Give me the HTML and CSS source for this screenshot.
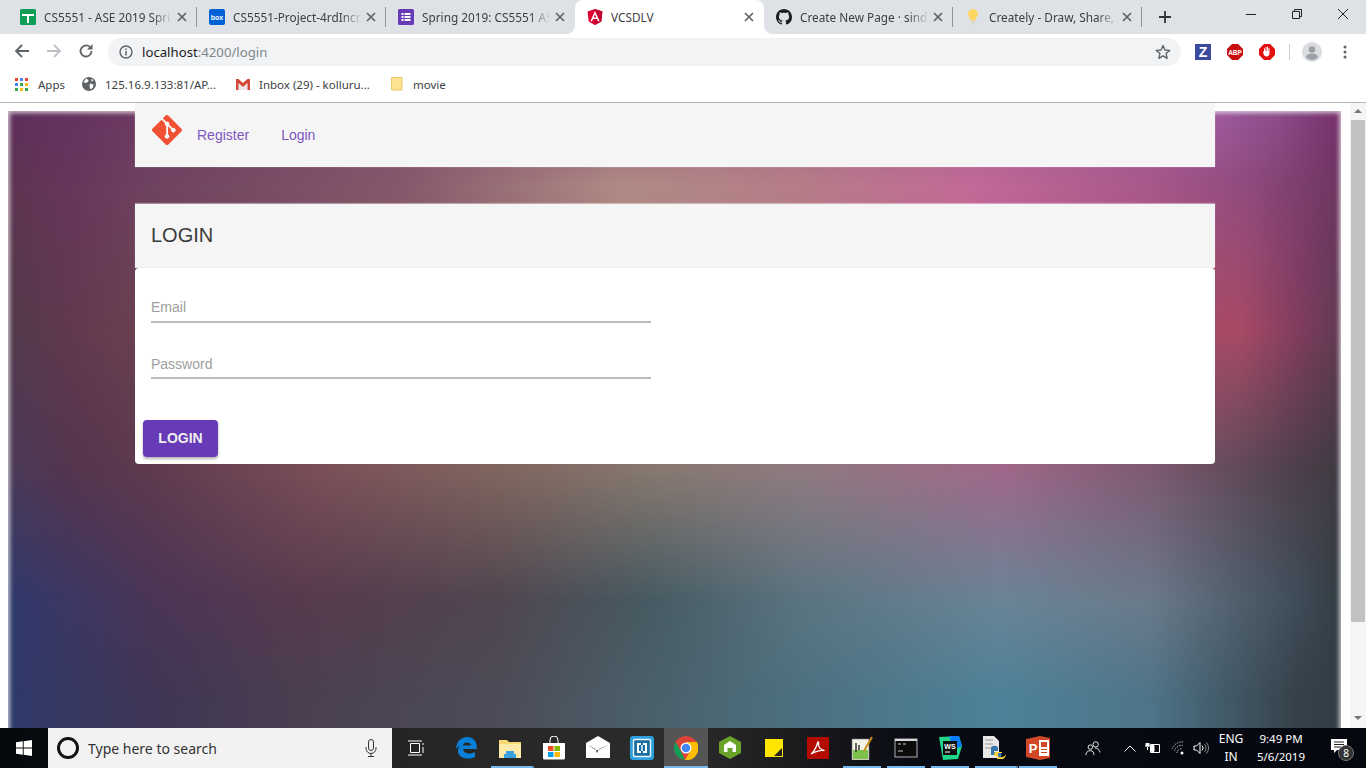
FILE: index.html
```html
<!DOCTYPE html>
<html lang="en">
<head>
<meta charset="utf-8">
<title>VCSDLV</title>
<link rel="stylesheet" href="styles.css">
</head>
<body>
<header class="chrome">
  <div class="tabstrip">
    <div class="tab">
      <svg class="fav" viewBox="0 0 16 16"><rect width="16" height="16" rx="1.5" fill="#0f9d58"/><path d="M2 5h12v2H9v7H7V7H2z" fill="#fff"/></svg>
      <span class="tab-title">CS5551 - ASE 2019 Spri</span><svg class="tab-x" viewBox="0 0 10 10"><path d="M1 1l8 8M9 1 1 9"/></svg>
    </div>
    <div class="tab">
      <svg class="fav" viewBox="0 0 16 16"><rect width="16" height="16" rx="2" fill="#0061d5"/><text x="8" y="11" class="fav-box">box</text></svg>
      <span class="tab-title">CS5551-Project-4rdIncr</span><svg class="tab-x" viewBox="0 0 10 10"><path d="M1 1l8 8M9 1 1 9"/></svg>
    </div>
    <div class="tab tab-before-active">
      <svg class="fav" viewBox="0 0 16 16"><rect width="16" height="16" rx="1.5" fill="#673ab7"/><path d="M3.500 4h2v2h-2zM6.500 4h6v2h-6zM3.500 7h2v2h-2zM6.500 7h6v2h-6zM3.500 10h2v2h-2zM6.500 10h6v2h-6z" fill="#fff"/></svg>
      <span class="tab-title">Spring 2019: CS5551 AS</span><svg class="tab-x" viewBox="0 0 10 10"><path d="M1 1l8 8M9 1 1 9"/></svg>
    </div>
    <div class="tab tab-active">
      <svg class="fav" viewBox="0 0 16 16"><path d="M8 0 .6 2.600l1.100 9.800L8 16l6.300-3.600 1.100-9.800z" fill="#dd0031"/><path d="M8 0v16l6.300-3.600 1.100-9.800z" fill="#c3002f"/><path d="M8 1.900 3.400 12.200h1.700l.9-2.300h4l.9 2.300h1.700zm1.300 6.600H6.700L8 5.300z" fill="#fff"/></svg>
      <span class="tab-title tab-title-plain">VCSDLV</span><svg class="tab-x" viewBox="0 0 10 10"><path d="M1 1l8 8M9 1 1 9"/></svg>
    </div>
    <div class="tab">
      <svg class="fav" viewBox="0 0 16 16"><path d="M8 0C3.580 0 0 3.580 0 8c0 3.540 2.290 6.530 5.470 7.590.4.070.55-.17.55-.38 0-.19-.01-.82-.01-1.490-2.010.37-2.530-.49-2.690-.94-.09-.23-.48-.94-.82-1.130-.28-.15-.68-.52-.01-.53.63-.01 1.080.58 1.230.82.72 1.210 1.870.87 2.330.66.07-.52.28-.87.51-1.070-1.780-.2-3.640-.89-3.640-3.950 0-.87.31-1.590.82-2.150-.08-.2-.36-1.020.08-2.120 0 0 .67-.21 2.200.82.64-.18 1.320-.27 2-.27.68 0 1.360.09 2 .27 1.530-1.040 2.200-.82 2.200-.82.44 1.100.16 1.920.08 2.120.51.56.82 1.270.82 2.150 0 3.070-1.870 3.750-3.650 3.950.29.25.54.73.54 1.480 0 1.070-.01 1.930-.01 2.200 0 .21.15.46.55.38A8.013 8.013 0 0016 8c0-4.420-3.580-8-8-8z" fill="#1b1f23"/></svg>
      <span class="tab-title">Create New Page · sind</span><svg class="tab-x" viewBox="0 0 10 10"><path d="M1 1l8 8M9 1 1 9"/></svg>
    </div>
    <div class="tab">
      <svg class="fav" viewBox="0 0 16 16"><path d="M8 0a5 5 0 0 0-5 5c0 2 1.200 3 2 4.300.5.800.6 1.700.6 2.200h4.800c0-.5.100-1.400.6-2.200C11.800 8 13 7 13 5a5 5 0 0 0-5-5z" fill="#fdd663"/><path d="M6 12.500h4V14.500l-1 1H7l-1-1z" fill="#d9d9d0"/></svg>
      <span class="tab-title">Creately - Draw, Share, </span><svg class="tab-x" viewBox="0 0 10 10"><path d="M1 1l8 8M9 1 1 9"/></svg>
    </div>
    <svg class="newtab" viewBox="0 0 12 12"><path d="M6 0v12M0 6h12" stroke="#2f3237" stroke-width="1.800" fill="none"/></svg>
    <div class="winctl">
      <svg class="win-icon" viewBox="0 0 12 12"><path d="M1 6.500h10" stroke="#222" fill="none"/></svg>
      <svg class="win-icon" viewBox="0 0 12 12"><path d="M1.500 3.500h7v7h-7zM3.500 3.500v-2h7v7h-2" stroke="#222" fill="none"/></svg>
      <svg class="win-icon" viewBox="0 0 12 12"><path d="M1 1l10 10M11 1 1 11" stroke="#222" fill="none"/></svg>
    </div>
  </div>
  <div class="toolbar">
    <svg class="nav-btn" viewBox="0 0 16 16"><path d="M15 8H2M8 2 2 8l6 6" stroke="#5f6368" stroke-width="1.800" fill="none"/></svg>
    <svg class="nav-btn nav-gap" viewBox="0 0 16 16"><path d="M1 8h13M8 2l6 6-6 6" stroke="#bdc1c6" stroke-width="1.800" fill="none"/></svg>
    <svg class="nav-btn nav-gap" viewBox="0 0 16 16"><path d="M13.500 8a5.500 5.500 0 1 1-1.600-3.900" stroke="#5f6368" stroke-width="1.800" fill="none"/><path d="M14.500 1v5.500H9z" fill="#5f6368"/></svg>
    <div class="omnibox">
      <svg class="info" viewBox="0 0 14 14"><circle cx="7" cy="7" r="6" stroke="#5f6368" stroke-width="1.400" fill="none"/><path d="M7 6v4.500M7 3.500v1.500" stroke="#5f6368" stroke-width="1.500"/></svg>
      <span class="url"><span class="url-host">localhost</span>:4200/login</span>
      <svg class="star" viewBox="0 0 16 16"><path d="M8 1.500 9.900 6l4.800.4-3.600 3.200 1 4.700L8 11.800l-4.100 2.500 1-4.700L1.300 6.400 6.100 6z" stroke="#5f6368" stroke-width="1.400" stroke-linejoin="round" fill="none"/></svg>
    </div>
    <div class="exts">
      <svg class="ext" viewBox="0 0 16 16"><rect width="16" height="16" fill="#3b4a9e"/><text x="8" y="13" class="ext-z">Z</text></svg>
      <svg class="ext" viewBox="0 0 16 16"><path d="M5 0h6l5 5v6l-5 5H5l-5-5V5z" fill="#c70d0d"/><text x="8" y="10.500" class="ext-abp">ABP</text></svg>
      <svg class="ext" viewBox="0 0 16 16"><path d="M5 0h6l5 5v6l-5 5H5l-5-5V5z" fill="#e60f0f"/><path d="M5 7V4.500h1V7h.5V3h1v4H8V2.800h1V7h.5V4h1v5.500c0 1.500-1 3-3 3-1.500 0-2.200-.8-2.700-2L3.800 8l.8-.4z" fill="#fff"/></svg>
      <span class="ext-sep"></span>
      <svg class="avatar" viewBox="0 0 20 20"><circle cx="10" cy="10" r="10" fill="#dadce0"/><circle cx="10" cy="7.500" r="3.300" fill="#9aa0a6"/><path d="M3.800 15c1-2.500 3.500-3.500 6.200-3.500s5.200 1 6.200 3.500c-1.500 2-3.800 3-6.200 3s-4.700-1-6.200-3z" fill="#9aa0a6"/></svg>
      <svg class="dots" viewBox="0 0 4 14"><circle cx="2" cy="2" r="1.500" fill="#5f6368"/><circle cx="2" cy="7" r="1.500" fill="#5f6368"/><circle cx="2" cy="12" r="1.500" fill="#5f6368"/></svg>
    </div>
  </div>
  <div class="bookmarks">
    <svg class="bm-apps" viewBox="0 0 13 13"><path d="M0 0h3v3H0z" fill="#ea4335"/><path d="M5 0h3v3H5z" fill="#4285f4"/><path d="M10 0h3v3h-3z" fill="#ea4335"/><path d="M0 5h3v3H0z" fill="#4285f4"/><path d="M5 5h3v3H5z" fill="#34a853"/><path d="M10 5h3v3h-3z" fill="#fbbc05"/><path d="M0 10h3v3H0z" fill="#34a853"/><path d="M5 10h3v3H5z" fill="#fbbc05"/><path d="M10 10h3v3h-3z" fill="#34a853"/></svg>
    <span class="bm-text bm-apps-text">Apps</span>
    <svg class="bm-globe" viewBox="0 0 14 14"><circle cx="7" cy="7" r="7" fill="#5f6368"/><path d="M4 1.500 6.500 3 6 5 3.500 6 1.500 5zM8 6.500l3.500 1-.5 3-2.500 2-1-3.500zM9.500 1.500l2 2-2 1z" fill="#fff"/></svg>
    <span class="bm-text bm-globe-text">125.16.9.133:81/AP...</span>
    <svg class="bm-gmail" viewBox="0 0 14 11"><path d="M2.500 4v7h9V4L7 8z" fill="#e8e8e8"/><path d="M0 0h2.500L7 4l4.500-4H14v11h-2.500V4L7 8 2.500 4v7H0z" fill="#d44638"/></svg>
    <span class="bm-text bm-gmail-text">Inbox (29) - kolluru...</span>
    <svg class="bm-folder" viewBox="0 0 12 14"><path d="M.5.500h10.500v12.500h-9.500a1 1 0 0 1-1-1z" fill="#fde293" stroke="#e8c868"/></svg>
    <span class="bm-text bm-folder-text">movie</span>
  </div>
</header>

<div class="viewport">
  <main class="page">
    <div class="backdrop">
      <div class="band band-600"></div>
      <div class="band band-470"></div>
      <div class="band band-330"></div>
      <div class="band band-185"></div>
      <div class="band band-120"></div>
      <div class="band band-edge"></div>
    </div>
    <div class="content">
      <nav class="navcard">
        <svg class="gitlogo" viewBox="0 0 92 92"><path fill="#f05133" d="M90.156 41.965 50.036 1.848a5.918 5.918 0 0 0-8.372 0l-8.328 8.332 10.566 10.566a7.030 7.030 0 0 1 7.230 1.684 7.034 7.034 0 0 1 1.669 7.277l10.187 10.184a7.028 7.028 0 0 1 7.278 1.672 7.040 7.040 0 0 1 0 9.957 7.050 7.050 0 0 1-9.965 0 7.044 7.044 0 0 1-1.528-7.660l-9.500-9.497V59.360a7.040 7.040 0 0 1 1.860 11.290 7.040 7.040 0 0 1-9.957 0 7.040 7.040 0 0 1 0-9.958 7.060 7.060 0 0 1 2.304-1.539V33.926a7.049 7.049 0 0 1-3.820-9.234L29.242 14.272 1.730 41.777a5.925 5.925 0 0 0 0 8.371L41.852 90.270a5.925 5.925 0 0 0 8.370 0l39.934-39.934a5.925 5.925 0 0 0 0-8.371"/></svg>
        <a class="navlink" href="#">Register</a>
        <a class="navlink" href="#">Login</a>
      </nav>
      <section class="login">
        <h1 class="login-head">LOGIN</h1>
        <form class="login-form">
          <input class="field" type="text" placeholder="Email">
          <input class="field" type="password" placeholder="Password">
          <button class="submit" type="button">LOGIN</button>
        </form>
      </section>
    </div>
  </main>
  <div class="scrollbar">
    <span class="arrow-up"></span>
    <span class="thumb"></span>
    <span class="arrow-down"></span>
  </div>
</div>

<footer class="taskbar">
  <div class="start"><svg class="start-logo" viewBox="0 0 16 16"><path d="M0 2.300 6.800 1.300v6.300H0zM7.700 1.200 16 0v7.600H7.700zM0 8.400h6.800v6.300L0 13.700zM7.700 8.400H16V16l-8.300-1.200z" fill="#fff"/></svg></div>
  <div class="search">
    <span class="cortana"></span>
    <span class="search-text">Type here to search</span>
    <svg class="mic" viewBox="0 0 12 18"><rect x="3.500" y=".5" width="5" height="11" rx="2.500" stroke="#333" fill="none"/><path d="M1 8v1.500a5 5 0 0 0 10 0V8M6 14.500v3M3 17.500h6" stroke="#333" fill="none"/></svg>
  </div>
  <div class="taskview"><svg class="tv-icon" viewBox="0 0 16 16"><path d="M2.500 3.500h9v9h-9zM0 1h14M0 15h14M15 3v2M15 7v6" stroke="#fff" fill="none"/></svg></div>
  <div class="tb-items">
    <div class="tb-item"><svg class="tb-icon" viewBox="0 0 24 24"><path d="M2 14C2 6 7 1 13.500 1 19 1 23 5 23 13H9c.5 4.500 6 6 12 3v5c-8 3.500-17 1-17-6 0-3 1-6 4-8-2 1.500-4 3.500-6 6zM9 9.500h8c0-4-8-4-8 0z" fill="#0a7fd9"/></svg></div>
    <div class="tb-item tb-open tb-stack"><svg class="tb-icon" viewBox="0 0 24 24"><path d="M1 4h8l2 2h12v16H1z" fill="#f7d774"/><path d="M1 8h22v14H1z" fill="#fde9a8"/><path d="M8 15h8v3h2v4H6v-4h2z" fill="#3aa0e0"/></svg></div>
    <div class="tb-item"><svg class="tb-icon" viewBox="0 0 24 24"><path d="M1 7h22v15a1.500 1.500 0 0 1-1.500 1.500h-19A1.500 1.500 0 0 1 1 22z" fill="#fff"/><path d="M8 8V4a4 4 0 0 1 8 0v4" stroke="#fff" fill="none"/><path d="M6 10h5.500v5H6z" fill="#f25022"/><path d="M12.500 10H18v5h-5.500z" fill="#7fba00"/><path d="M6 16h5.500v5H6z" fill="#00a4ef"/><path d="M12.500 16H18v5h-5.500z" fill="#ffb900"/></svg></div>
    <div class="tb-item"><svg class="tb-icon" viewBox="0 0 24 24"><path d="M0 7 12 0l12 7v15H0z" fill="#fff"/><path d="M0 8l11 6.500L24 8 13 13l-2 4-1.500-4z" fill="#222"/></svg></div>
    <div class="tb-item"><svg class="tb-icon" viewBox="0 0 24 24"><rect width="24" height="24" rx="3" fill="#2c9fdd"/><rect x="3.500" y="3.500" width="17" height="17" rx="1" fill="#1b6d9e" stroke="#e8f4fb" stroke-width="1.400"/><path d="M7 7h4v2H9v6h2v2H7zM17 7h-4v2h2v6h-2v2h4z" fill="#fff"/><path d="M11 9h2v6h-2z" fill="#bcdcf0"/></svg></div>
    <div class="tb-item tb-active"><svg class="tb-icon" viewBox="0 0 24 24"><circle cx="12" cy="12" r="12" fill="#db4437"/><path d="M12 6h10.800A12 12 0 0 1 11 24l5.500-9.500z" fill="#fbbc05"/><path d="M1.600 6 7 15.500 11 24A12 12 0 0 1 1.600 6z" fill="#0f9d58"/><circle cx="12" cy="12" r="5.500" fill="#fff"/><circle cx="12" cy="12" r="4.300" fill="#4285f4"/></svg></div>
    <div class="tb-item"><svg class="tb-icon" viewBox="0 0 24 24"><path d="M12 0 23 6v11l-11 6L1 17V6z" fill="#6aa32a"/><path d="M12 5l6 4v7h-3.500v-4h-5v4H6V9z" fill="#fff"/></svg></div>
    <div class="tb-item"><svg class="tb-icon tb-sticky" viewBox="0 0 18 18"><path d="M0 0h18v18H0z" fill="#ffe600"/><path d="M17 9v8H9z" fill="#222"/></svg></div>
    <div class="tb-item"><svg class="tb-icon" viewBox="0 0 24 24"><rect x="1" y="1" width="22" height="22" fill="#b30b00"/><path d="M5 18c3-2 5-6 6.500-11 .5-2 1.500-1 1 1-.5 3 2 6 6 6.500-4-.5-9 1-13.500 3.500z" stroke="#fff" stroke-width="1.300" fill="none"/></svg></div>
    <div class="tb-item tb-open"><svg class="tb-icon" viewBox="0 0 24 24"><path d="M2 3h17v21H2z" fill="#f1f1e4" stroke="#777" stroke-width=".6"/><path d="M3 14h15v9H3z" fill="#7cc14a"/><path d="M6 7v9M9 9v5" stroke="#333" stroke-width="1.500"/><path d="M14 15 22 1" stroke="#c98a1b" stroke-width="2"/></svg></div>
    <div class="tb-item tb-open"><svg class="tb-icon" viewBox="0 0 24 24"><rect x="1" y="3" width="22" height="18" fill="#0c0c0c" stroke="#b0b0b0"/><path d="M1 3h22v2H1z" fill="#d8d8d8"/><path d="M4 8h3M9 8h3M4 15h5" stroke="#ccc"/></svg></div>
    <div class="tb-item tb-open"><svg class="tb-icon" viewBox="0 0 24 24"><path d="M1 1l20-1 3 10-4 13-15 1z" fill="#21d789"/><path d="M11 0h10l3 10-8 4z" fill="#087cfa"/><rect x="5" y="5" width="14" height="14" fill="#111"/><text x="12" y="13" class="tb-ws">WS</text><path d="M7 16h5" stroke="#fff"/></svg></div>
    <div class="tb-item tb-open tb-stack"><svg class="tb-icon" viewBox="0 0 24 24"><path d="M1 0h11l5 5v17H1z" fill="#e8e8e8"/><path d="M3 4h8M3 8h8M3 12h6" stroke="#999"/><path d="M9 12c0-3 7-3 7 0v3H12v1h6c2 0 2 6 0 6h-2v-3H9z" fill="#3776ab"/><path d="M24 17c0 5-8 5-8 3v-3h4v-1h-6c-2 0-2 3-2 4h3v3h5c2 0 4-2 4-6z" fill="#ffd43b"/></svg></div>
    <div class="tb-item tb-open"><svg class="tb-icon" viewBox="0 0 24 24"><path d="M14 0 24 2v20l-10 2L0 21V3z" fill="#d24726"/><path d="M13 4h10v16H13z" fill="#fff"/><path d="M15 6h6v5h-6zM15 13h6v1h-6zM15 16h6v1h-6z" fill="#d24726"/><text x="7" y="17" class="tb-p">P</text></svg></div>
  </div>
  <div class="tray">
    <svg class="tray-people" viewBox="0 0 18 18"><circle cx="12" cy="5" r="3" stroke="#fff" fill="none"/><circle cx="6" cy="8" r="2.500" stroke="#fff" fill="none"/><path d="M1 17c0-3 2-5 5-5s4 2 4 5M11 9c3 0 5 2 6 5" stroke="#fff" fill="none"/></svg>
    <svg class="tray-chev" viewBox="0 0 12 7"><path d="M.5 6.500 6 1l5.500 5.500" stroke="#fff" fill="none"/></svg>
    <svg class="tray-batt" viewBox="0 0 16 12"><path d="M5.500 2.500h9v8h-9z" stroke="#fff" fill="none"/><path d="M6.500 3.500H9v6H6.500zM1 1v3h3V1M0 4h5M2.500 5v3" stroke="#fff" fill="#fff"/></svg>
    <svg class="tray-wifi" viewBox="0 0 14 14"><path d="M1 8a11 11 0 0 1 12-7M3.500 10A7 7 0 0 1 12 4.500M6 12a4 4 0 0 1 5-4" stroke="#bbb" stroke-dasharray="1.500 1" fill="none"/><circle cx="11" cy="12" r="1.500" fill="#fff"/></svg>
    <svg class="tray-sound" viewBox="0 0 16 14"><path d="M1 5h2.500L7 1.500v11L3.500 9H1z" stroke="#fff" fill="none"/><path d="M9 4.500a3.500 3.500 0 0 1 0 5" stroke="#fff" fill="none"/><path d="M11.500 3a6 6 0 0 1 0 8M13.500 1.500a8.500 8.500 0 0 1 0 11" stroke="#888" fill="none"/></svg>
    <div class="tray-lang"><span>ENG</span><span>IN</span></div>
    <div class="tray-clock"><span>9:49 PM</span><span>5/6/2019</span></div>
    <div class="tray-notif">
      <svg class="notif-icon" viewBox="0 0 16 15"><path d="M0 0h16v11H6l-3 3v-3H0z" fill="#fff"/><path d="M3 3h10M3 5.500h10M3 8h7" stroke="#222"/></svg>
      <span class="notif-badge">8</span>
    </div>
  </div>
</footer>
</body>
</html>
```

FILE: styles.css
```css
* { box-sizing: border-box; }
html, body { height: 100%; margin: 0; }
body {
  display: flex;
  flex-direction: column;
  height: 768px;
  overflow: hidden;
  background: #fff;
  font-family: "Liberation Sans", Arial, sans-serif;
}

/* browser chrome */
.chrome { flex: none; height: 103px; border-bottom: 1px solid #b4b4b4; background: #fff; }
.tabstrip { display: flex; align-items: center; height: 34px; padding-left: 8px; background: #dee1e6; }
.tab {
  position: relative;
  display: flex;
  align-items: center;
  flex: none;
  width: 189px;
  height: 34px;
  padding: 0 10px 0 12px;
  font: 11.800px "Noto Sans", sans-serif;
  color: #3c4043;
}
.tab::after {
  content: "";
  position: absolute;
  right: 0;
  top: 7px;
  height: 20px;
  border-right: 1px solid #8f9297;
}
.tab-before-active::after { display: none; }
.tab-active { background: #fff; border-radius: 8px 8px 0 0; }
.tab-active::before, .tab-active::after {
  content: "";
  position: absolute;
  top: auto;
  bottom: 0;
  width: 8px;
  height: 8px;
  border: 0;
}
.tab-active::before { left: -8px; background: radial-gradient(circle at 0 0, transparent 7.500px, #fff 8px); }
.tab-active::after { right: -8px; background: radial-gradient(circle at 100% 0, transparent 7.500px, #fff 8px); }
.fav { flex: none; width: 16px; height: 16px; margin-right: 8px; }
.fav-box { font: bold 7px "Liberation Sans", sans-serif; fill: #fff; text-anchor: middle; }
.tab-title {
  flex: 1;
  min-width: 0;
  white-space: pre;
  overflow: hidden;
  -webkit-mask-image: linear-gradient(90deg, #000 84%, transparent 100%);
  mask-image: linear-gradient(90deg, #000 84%, transparent 100%);
}
.tab-title-plain { -webkit-mask-image: none; mask-image: none; }
.tab-x { flex: none; width: 10px; height: 10px; margin-left: 4px; stroke: #5f6368; stroke-width: 1.700; fill: none; }
.newtab { flex: none; width: 12px; height: 12px; margin-left: 17px; }
.winctl { display: flex; margin-left: auto; height: 34px; align-items: flex-start; }
.win-icon { width: 12px; height: 12px; margin: 8px 17px 0; }

.toolbar { display: flex; align-items: center; height: 34px; padding-left: 14px; }
.nav-btn { flex: none; width: 16px; height: 16px; }
.nav-gap { margin-left: 16px; }
.omnibox {
  display: flex;
  align-items: center;
  flex: none;
  width: 1073px;
  height: 28px;
  margin: 2px 0 0 14px;
  padding: 0 10px 0 11px;
  background: #f1f3f4;
  border-radius: 14px;
}
.info { flex: none; width: 14px; height: 14px; }
.url { margin-left: 9px; font: 13.200px "Noto Sans", sans-serif; color: #80868b; }
.url-host { color: #202124; }
.star { flex: none; width: 16px; height: 16px; margin-left: auto; }
.exts { display: flex; align-items: center; margin-top: 2px; }
.ext { flex: none; width: 16px; height: 16px; margin-left: 16px; }
.ext:first-child { margin-left: 14px; }
.ext-z { font: bold 14px "Liberation Sans", sans-serif; fill: #fff; text-anchor: middle; }
.ext-abp { font: bold 6.500px "Liberation Sans", sans-serif; fill: #fff; text-anchor: middle; }
.ext-sep { width: 1px; height: 16px; margin: 0 12px 0 14px; background: #d0d0d0; }
.avatar { flex: none; width: 20px; height: 20px; }
.dots { flex: none; width: 4px; height: 14px; margin-left: 21px; }

.bookmarks { display: flex; align-items: center; height: 32px; padding-left: 15px; }
.bm-text { font: 11.500px "Noto Sans", sans-serif; color: #3c4043; white-space: nowrap; }
.bm-apps { flex: none; width: 13px; height: 13px; }
.bm-apps-text { margin-left: 10px; width: 44px; }
.bm-globe { flex: none; width: 14px; height: 14px; }
.bm-globe-text { margin-left: 9px; width: 131px; }
.bm-gmail { flex: none; width: 14px; height: 11px; }
.bm-gmail-text { margin-left: 9px; width: 132px; }
.bm-folder { flex: none; width: 12px; height: 14px; }
.bm-folder-text { margin-left: 10px; }

/* page */
.viewport { flex: 1; display: flex; min-height: 0; }
.page { position: relative; flex: 1; min-width: 0; overflow: hidden; background: #fff; }

/* Blurred wallpaper: horizontal colour rows, each fading into the row below. */
.backdrop {
  position: absolute;
  left: 8px;
  top: 8px;
  right: 9px;
  bottom: -20px;
  background: linear-gradient(90deg, #2c3868 0, #323a68 22px, #3f3555 142px, #4a3f50 292px, #4c4c58 492px, #4a606a 642px, #4c7080 792px, #4c8299 992px, #4e7488 1142px, #354048 1292px, #333c44 100%);
}
.band { position: absolute; inset: 0; }
.band-600 {
  background: linear-gradient(90deg, #2d3a6c 0, #35386a 22px, #4a3556 142px, #573a4e 292px, #504650 492px, #465a62 642px, #5a7480 792px, #6a8496 992px, #6a7a8a 1142px, #3e4c58 1292px, #333c42 100%);
  -webkit-mask-image: linear-gradient(180deg, #000 489px, transparent 589px);
  mask-image: linear-gradient(180deg, #000 489px, transparent 589px);
}
.band-470 {
  background: linear-gradient(90deg, #4a3a58 0, #54354e 62px, #5e3a4f 142px, #7a4f58 312px, #80665f 492px, #86786f 642px, #8e7a80 792px, #a0688a 992px, #7d5a72 1142px, #4c3f4a 1292px, #3f3a42 100%);
  -webkit-mask-image: linear-gradient(180deg, #000 359px, transparent 489px);
  mask-image: linear-gradient(180deg, #000 359px, transparent 489px);
}
.band-330 {
  background: linear-gradient(90deg, #523a4c 0, #61394f 62px, #6a4050 127px, #8a5560 392px, #a07a7c 692px, #b05a80 992px, #a84a66 1207px, #a84a66 1232px, #803c5e 1292px, #603a52 100%);
  -webkit-mask-image: linear-gradient(180deg, #000 219px, transparent 359px);
  mask-image: linear-gradient(180deg, #000 219px, transparent 359px);
}
.band-185 {
  background: linear-gradient(90deg, #5e3450 0, #67365a 62px, #6f4260 142px, #85586b 392px, #b08b85 612px, #b67d88 792px, #c46a98 962px, #a8588a 1142px, #8e4a7c 1242px, #6d3560 100%);
  -webkit-mask-image: linear-gradient(180deg, #000 74px, transparent 219px);
  mask-image: linear-gradient(180deg, #000 74px, transparent 219px);
}
.band-120 {
  background: linear-gradient(90deg, #5e2f5a 0, #65325f 62px, #6e3a62 127px, #a06a80 692px, #9e5a9c 1207px, #8a4c88 1272px, #75306a 100%);
  -webkit-mask-image: linear-gradient(180deg, #000 9px, transparent 74px);
  mask-image: linear-gradient(180deg, #000 9px, transparent 74px);
}
.band-edge { box-shadow: inset 0 0 4px 2px rgba(255,255,255,.7); }

.content { position: relative; width: 1080px; margin: 0 auto; }
.navcard {
  display: flex;
  align-items: center;
  gap: 32px;
  height: 64px;
  padding: 0 0 0 17px;
  background: #f5f5f5;
  box-shadow: 0 0 1px rgba(255,255,255,.5);
}
.gitlogo { flex: none; width: 30px; height: 30px; margin: -11px -17px 0 0; }
.navlink { font-size: 14px; color: #7e57c2; text-decoration: none; }
.login { margin-top: 37px; }
.login-head {
  height: 64px;
  margin: 0;
  padding: 20px 16px 0;
  background: #f5f5f5;
  border-bottom: 1px solid #eee;
  box-shadow: 0 -1px 1px rgba(255,255,255,.4);
  font-size: 20px;
  line-height: 23px;
  font-weight: 400;
  color: #3a3a3a;
}
.login-form {
  display: flex;
  flex-direction: column;
  align-items: flex-start;
  height: 196px;
  padding: 19px 16px 0;
  background: #fff;
  border-radius: 4px;
}
.field {
  display: block;
  width: 500px;
  height: 36px;
  padding: 6px 0 0;
  border: 0;
  border-bottom: 2px solid #bdbdbd;
  outline: 0;
  font: 14px "Liberation Sans", sans-serif;
  background: transparent;
}
.field::placeholder { color: #9e9e9e; }
.field + .field { margin-top: 20px; padding-top: 8px; }
.submit {
  width: 75px;
  height: 37px;
  margin: 41px 0 0 -8px;
  padding: 0 0 2px;
  border: 0;
  border-radius: 4px;
  background: #673ab7;
  color: #eee;
  font: bold 14px "Liberation Sans", sans-serif;
  box-shadow: 0 2px 3px rgba(0,0,0,.3);
}
.scrollbar { flex: none; display: flex; flex-direction: column; align-items: center; width: 16px; padding-top: 6px; background: #f5f5f5; }
.arrow-up { width: 0; height: 0; border: 4px solid transparent; border-top: 0; border-bottom: 4px solid #777; }
.thumb { width: 14px; height: 502px; margin-top: 7px; background: #c1c1c1; }
.arrow-down { width: 0; height: 0; margin-top: 94px; border: 4px solid transparent; border-bottom: 0; border-top: 4px solid #777; }

/* taskbar */
.taskbar {
  flex: none;
  display: flex;
  align-items: stretch;
  height: 40px;
  background: linear-gradient(90deg, #04070c 0, #262626 31%, #2c2c2c 50%, #1f1f20 56%, #070a12 68%, #060810 100%);
  color: #fff;
}
.start { flex: none; display: flex; align-items: center; justify-content: center; width: 48px; }
.start-logo { width: 16px; height: 16px; }
.search { flex: none; display: flex; align-items: center; width: 344px; padding-left: 9px; background: #f2f2f2; }
.cortana { flex: none; width: 22px; height: 22px; border: 3px solid #111; border-radius: 50%; }
.search-text { margin-left: 9px; font: 14px "Noto Sans", sans-serif; color: #333; }
.mic { flex: none; width: 12px; height: 18px; margin-left: auto; margin-right: 15px; }
.taskview { flex: none; display: flex; align-items: center; justify-content: center; width: 52px; }
.tv-icon { width: 16px; height: 16px; margin-right: 4px; }
.tb-items { flex: none; display: flex; }
.tb-item { position: relative; flex: none; display: flex; align-items: center; justify-content: center; width: 44px; height: 40px; }
.tb-icon { width: 24px; height: 24px; }
.tb-sticky { width: 18px; height: 18px; }
.tb-open::after { content: ""; position: absolute; left: 3px; right: 3px; bottom: 0; height: 2px; background: #76b9ed; }
.tb-stack::after { right: 0; box-shadow: 2px 0 0 #5a8db5; }
.tb-active { background: #555; }
.tb-active::after { content: ""; position: absolute; left: 0; right: 0; bottom: 0; height: 2px; background: #76b9ed; }
.tb-ws { font: bold 7px "Liberation Sans", sans-serif; fill: #fff; text-anchor: middle; }
.tb-p { font: bold 13px "Liberation Sans", sans-serif; fill: #fff; text-anchor: middle; }
.tray { flex: 1; display: flex; align-items: center; font: 12px "Noto Sans", sans-serif; color: #fff; }
.tray-people { flex: none; width: 16px; height: 16px; margin-left: 25px; }
.tray-chev { flex: none; width: 12px; height: 7px; margin-left: 23px; }
.tray-batt { flex: none; width: 16px; height: 12px; margin-left: 9px; }
.tray-wifi { flex: none; width: 14px; height: 14px; margin-left: 10px; }
.tray-sound { flex: none; width: 16px; height: 14px; margin-left: 8px; }
.tray-lang { flex: none; display: flex; flex-direction: column; align-items: center; width: 30px; margin-left: 7px; line-height: 18px; }
.tray-clock { flex: none; display: flex; flex-direction: column; align-items: center; width: 60px; margin-left: 5px; line-height: 18px; font-size: 11.500px; }
.tray-notif { position: relative; flex: none; width: 24px; height: 24px; margin-left: 20px; }
.notif-icon { position: absolute; left: 0; top: 3px; width: 16px; height: 15px; }
.notif-badge {
  position: absolute;
  left: 7px;
  top: 9px;
  width: 16px;
  height: 16px;
  border-radius: 50%;
  background: #333;
  border: 1px solid #777;
  font-size: 10px;
  line-height: 14px;
  text-align: center;
}
```
